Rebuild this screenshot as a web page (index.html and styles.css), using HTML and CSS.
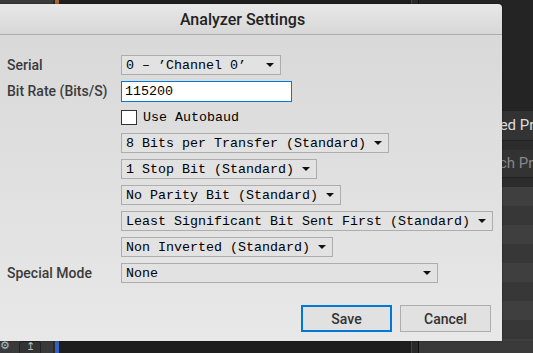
FILE: index.html
```html
<!DOCTYPE html>
<html lang="en">
<head>
  <meta charset="UTF-8" />
  <meta name="viewport" content="width=device-width, initial-scale=1" />
  <link rel="stylesheet" href="styles.css">
</head>
<body>

  <!-- app behind the dialog -->
  <div class="app">
    <aside class="dock">
      <div class="dock-fill"></div>
      <div class="dock-tools">
        <span class="tool gear">&#9881;</span>
        <span class="tool up">&#8613;</span>
      </div>
    </aside>
    <div class="accent">
      <div class="accent-top"></div>
      <div class="accent-bottom"></div>
    </div>
    <main class="canvas"></main>
    <div class="divider"></div>
    <section class="side">
      <div class="side-gap"></div>
      <div class="side-head">Decoded Protocols</div>
      <div class="side-sep"></div>
      <div class="side-search">Search Protocols</div>
      <div class="side-sep"></div>
      <div class="side-list"></div>
      <div class="side-foot"></div>
    </section>
  </div>

  <!-- Analyzer settings dialog -->
  <div class="dialog">
    <header class="dialog-title">Analyzer Settings</header>
    <div class="dialog-body">
      <div class="form">
        <span class="label">Serial</span>
        <div class="combo serial"><span>0 – ’Channel 0’</span><i class="arrow"></i></div>

        <span class="label">Bit Rate (Bits/S)</span>
        <div class="input">115200</div>

        <span class="label"></span>
        <div class="check"><span class="box"></span><span>Use Autobaud</span></div>

        <span class="label"></span>
        <div class="combo"><span>8 Bits per Transfer (Standard)</span><i class="arrow"></i></div>

        <span class="label"></span>
        <div class="combo"><span>1 Stop Bit (Standard)</span><i class="arrow"></i></div>

        <span class="label"></span>
        <div class="combo"><span>No Parity Bit (Standard)</span><i class="arrow"></i></div>

        <span class="label"></span>
        <div class="combo"><span>Least Significant Bit Sent First (Standard)</span><i class="arrow"></i></div>

        <span class="label"></span>
        <div class="combo"><span>Non Inverted (Standard)</span><i class="arrow"></i></div>

        <span class="label">Special Mode</span>
        <div class="combo special"><span>None</span><i class="arrow"></i></div>
      </div>

      <div class="actions">
        <button class="btn primary">Save</button>
        <button class="btn">Cancel</button>
      </div>
    </div>
  </div>

</body>
</html>
```

FILE: styles.css
```css
body {
  margin: 0;
  width: 533px;
  height: 353px;
  overflow: hidden;
  background-color: #1e1e1e;
  font-family: 'Roboto', 'Liberation Sans', sans-serif;
  position: relative;
}

/* ---- background app ---- */

.app {
  display: grid;
  grid-template-columns: 53px 6px 352px 8px 114px;
  height: 353px;
}

.dock {
  display: flex;
  flex-direction: column;
  background-color: #3a3a3a;
}

.dock-fill { flex: 1; }

.dock-tools {
  height: 12px;
  display: flex;
  align-items: flex-start;
  gap: 9px;
}

.tool {
  color: #bbb;
  font-size: 11px;
  line-height: 10px;
}

.tool.up {
  width: 20px;
  height: 12px;
  border: 1px solid #222;
  border-radius: 3px;
  text-align: center;
  background-color: #333;
}

.accent {
  display: flex;
  flex-direction: column;
  border-left: 2px solid #2a2a2a;
}

.accent-top { flex: 1; background-color: #a8682c; }
.accent-bottom { flex: 1; background-color: #3262c4; }

.canvas { background-color: #1e1e1e; }

.divider {
  background-color: #2a2a2a;
  border-left: 1px solid #444;
  border-right: 1px solid #111;
}

.side {
  display: flex;
  flex-direction: column;
  background-color: #242424;
  color: #ddd;
  font-size: 15px;
  white-space: nowrap;
  overflow: hidden;
}

.side-gap { height: 111px; }

.side-head {
  height: 29px;
  line-height: 29px;
  padding-left: 38px;
  background-color: #333;
}

.side-sep {
  height: 9px;
  background-color: #2c2c2c;
  border-top: 1px solid #222;
}

.side-search {
  height: 27px;
  line-height: 27px;
  padding-left: 50px;
  background-color: #333;
  color: #888;
}

.side-list {
  flex: 1;
  background: repeating-linear-gradient(#3f3f3f 0 19px, #373737 19px 38px);
}

.side-foot {
  height: 12px;
  background-color: #3a3a3a;
}

/* ---- dialog ---- */

.dialog {
  position: absolute;
  left: -17px;
  top: 4px;
  width: 519px;
  height: 337px;
  border-top-right-radius: 4px;
  overflow: hidden;
  box-shadow: 0 0 2px rgba(0, 0, 0, 0.5);
}

.dialog-title {
  height: 30px;
  line-height: 31px;
  text-align: center;
  font-size: 16px;
  font-weight: 500;
  color: #222;
  background: linear-gradient(#e8e8e8, #d7d7d7);
  border-bottom: 1px solid #adadad;
}

.dialog-body {
  height: 306px;
  box-sizing: border-box;
  padding: 20px 11px 10px 24px;
  background: linear-gradient(#d9d9d9, #e8e8e8);
  display: flex;
  flex-direction: column;
}

.form {
  display: grid;
  grid-template-columns: 114px auto;
  grid-auto-rows: 20px;
  row-gap: 6px;
  justify-items: start;
  align-items: center;
}

.label {
  font-size: 14px;
  font-weight: 500;
  color: #3b3b3b;
}

.combo,
.input,
.check {
  font-family: 'Liberation Mono', monospace;
  font-size: 13.33px;
  color: #000;
}

.combo {
  height: 20px;
  box-sizing: border-box;
  display: flex;
  align-items: center;
  gap: 8px;
  padding: 0 6px 0 4px;
  background-color: #e2e2e2;
  border: 1px solid #adadad;
  white-space: nowrap;
}

.combo.serial {
  width: 160px;
  justify-content: space-between;
}

.combo.special {
  width: 317px;
  justify-content: space-between;
}

.arrow {
  width: 0;
  height: 0;
  border-left: 4px solid transparent;
  border-right: 4px solid transparent;
  border-top: 4px solid #111;
}

.input {
  width: 171px;
  height: 21px;
  box-sizing: border-box;
  padding-left: 3px;
  line-height: 19px;
  background-color: #fff;
  border: 1px solid #0078d7;
}

.check {
  display: flex;
  align-items: center;
  gap: 6px;
}

.box {
  width: 16px;
  height: 15px;
  box-sizing: border-box;
  background-color: #fff;
  border: 1px solid #333;
}

.actions {
  display: flex;
  justify-content: flex-end;
  gap: 8px;
  margin-top: 22px;
}

.btn {
  width: 91px;
  height: 27px;
  padding: 0;
  font-family: 'Roboto', 'Liberation Sans', sans-serif;
  font-size: 14px;
  font-weight: 500;
  color: #333;
  background-color: #e1e1e1;
  border: 1px solid #adadad;
}

.btn.primary {
  border: 2px solid #0078d7;
}
```
